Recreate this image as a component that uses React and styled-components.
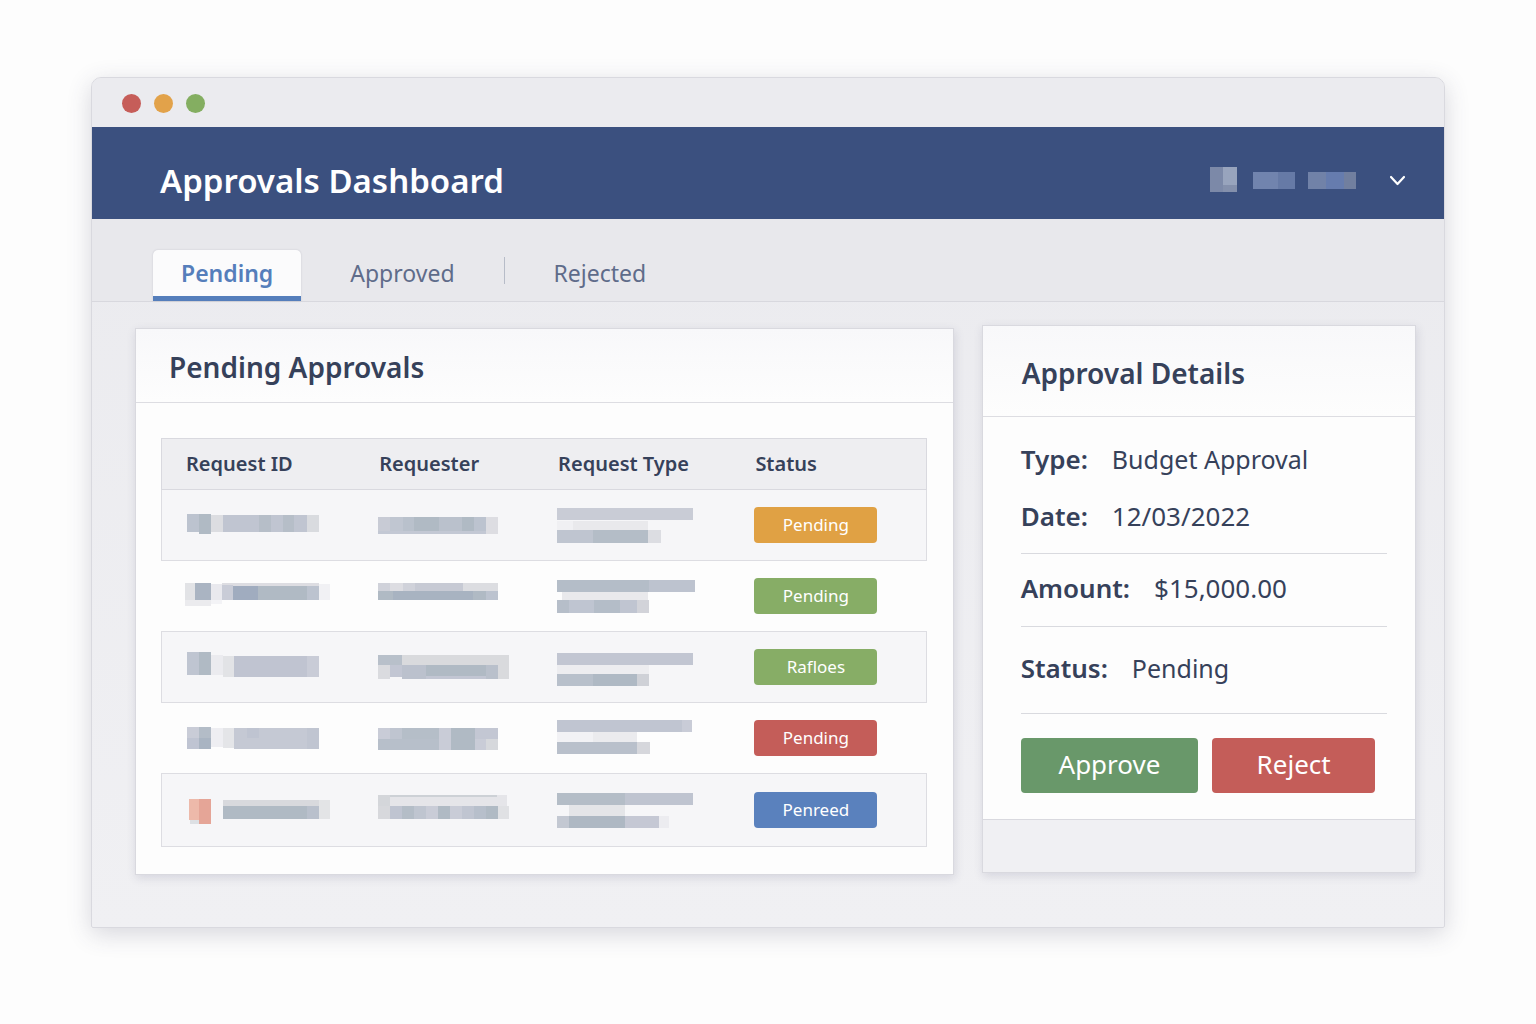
import React, { useState } from 'react';
import styled, { createGlobalStyle } from 'styled-components';

const GlobalStyle = createGlobalStyle`
  *, *::before, *::after { box-sizing: border-box; }

  body {
    margin: 0;
    background: #fdfdfd;
    color: #36415a;
    font-family: 'Noto Sans', 'Open Sans', sans-serif;
  }

  button {
    font-family: inherit;
    border: 0;
    cursor: pointer;
  }
`;

const Page = styled.div`
  min-height: 100vh;
  padding: 77px 91px 95px;
`;

const Window = styled.div`
  background: linear-gradient(#eaeaee, #f0f0f3);
  border: 1px solid #d9d9df;
  border-radius: 10px 10px 2px 2px;
  box-shadow: 0 6px 24px rgba(60, 60, 90, 0.2);
  overflow: hidden;
`;

const TitleBar = styled.div`
  display: flex;
  align-items: center;
  gap: 13px;
  height: 49px;
  padding: 2px 30px 0;
  background: #ebebef;
`;

const Dot = styled.span`
  width: 19px;
  height: 19px;
  border-radius: 50%;
  background: ${({ $color }) => $color};
`;

const Header = styled.header`
  display: flex;
  align-items: center;
  justify-content: space-between;
  height: 92px;
  padding: 16px 38px 0 68px;
  background: #3b507f;
`;

const AppTitle = styled.h1`
  margin: 0;
  color: #fff;
  font-size: 33px;
  font-weight: 600;
  line-height: 44px;
`;

const UserMenu = styled.button`
  display: flex;
  align-items: center;
  gap: 32px;
  padding: 0;
  background: none;
`;

const Tabs = styled.nav`
  display: flex;
  gap: 21px;
  height: 83px;
  padding: 31px 61px 0;
  background: #e8e8ec;
  border-bottom: 1px solid #d8d8de;
`;

const Tab = styled.button`
  padding: 0 28px;
  background: ${({ $active }) => ($active ? '#fbfbfc' : 'none')};
  border-bottom: 5px solid ${({ $active }) => ($active ? '#557ebb' : 'transparent')};
  border-radius: 5px 5px 0 0;
  box-shadow: ${({ $active }) => ($active ? '0 0 2px rgba(60, 60, 90, 0.2)' : 'none')};
  color: ${({ $active }) => ($active ? '#557ebb' : '#5f6c8a')};
  font-size: 23px;
  font-weight: ${({ $active }) => ($active ? 600 : 400)};
`;

const TabDivider = styled.span`
  width: 1px;
  height: 27px;
  margin-top: 7px;
  background: #b7bcc8;
`;

const Content = styled.main`
  display: grid;
  grid-template-columns: minmax(0, 818fr) minmax(0, 434fr);
  align-items: start;
  gap: 28px;
  padding: 23px 28px 52px 43px;
`;

const Panel = styled.section`
  background: #fdfdfd;
  border: 1px solid #d9d9df;
  box-shadow: 1px 3px 9px rgba(60, 60, 100, 0.15);
`;

const ListPanel = styled(Panel)`
  margin-top: 3px;
`;

const PanelHeader = styled.div`
  display: flex;
  align-items: center;
  height: ${({ $tall }) => ($tall ? 91 : 74)}px;
  padding: ${({ $tall }) => ($tall ? '3px 39px 0' : '2px 33px 0')};
  background: linear-gradient(#f8f8fa, #fdfdfd);
  border-bottom: 1px solid #dddde2;
`;

const PanelTitle = styled.h2`
  margin: 0;
  font-size: 28px;
  font-weight: 600;
  line-height: 36px;
`;

const TableWrap = styled.div`
  padding: 35px 26px 27px 25px;
`;

const Table = styled.table`
  width: 100%;
  table-layout: fixed;
  border-collapse: collapse;
`;

const HeadRow = styled.tr`
  height: 51px;
  background: #eeeef1;
  border: 1px solid #d9d9df;
`;

const HeadCell = styled.th`
  width: ${({ $width }) => $width};
  padding: 0 0 0 25px;
  font-size: 20px;
  font-weight: 600;
  line-height: 28px;
  text-align: left;

  &:first-child {
    padding-left: 24px;
  }
`;

const Row = styled.tr`
  height: 71px;

  &:nth-child(odd) {
    background: #f6f6f8;
    border: 1px solid #dddde2;
  }

  &:last-child {
    height: 73px;
  }
`;

const Cell = styled.td`
  padding: 0 0 0 24px;

  &:first-child {
    padding-left: 21px;
  }
`;

const Badge = styled.span`
  display: block;
  width: 123px;
  border-radius: 4px;
  background: ${({ $color }) => $color};
  color: #fff;
  font-size: 17px;
  font-variant-ligatures: none;
  line-height: 36px;
  text-align: center;
`;

const Mosaic = styled.svg`
  display: block;
  max-width: 100%;
`;

const Fields = styled.dl`
  margin: 0;
  padding: 7px 28px 0 38px;
`;

const FieldGroup = styled.div`
  display: grid;
  gap: 21px;
  padding: ${({ $pad }) => $pad};
  border-bottom: 1px solid #d9dadf;
`;

const Field = styled.div`
  display: flex;
  gap: 24px;
  line-height: 36px;
`;

const FieldName = styled.dt`
  font-size: 26px;
  font-weight: 600;
`;

const FieldValue = styled.dd`
  margin: 0;
  font-size: ${({ $numeric }) => ($numeric ? 26 : 25)}px;
`;

const Actions = styled.div`
  display: flex;
  gap: 14px;
  padding: 24px 40px 26px 38px;
`;

const ActionButton = styled.button`
  flex: ${({ $grow }) => $grow} 1 0;
  height: 55px;
  padding: 0 0 4px;
  border-radius: 4px;
  background: ${({ $color }) => $color};
  color: #fff;
  font-size: 26px;
`;

const PanelFooter = styled.div`
  height: 53px;
  background: #f0f0f3;
  border-top: 1px solid #d9d9df;
`;

// Each block is [x, y, width, height, colour]
const Redacted = ({ blocks, width = 150, height = 48, label }) => (
  <Mosaic
    width={width}
    height={height}
    viewBox={`0 0 ${width} ${height}`}
    shapeRendering="crispEdges"
    role="img"
    aria-label={label}
  >
    {blocks.map(([x, y, w, h, fill], i) => (
      <rect key={i} x={x} y={y} width={w} height={h} fill={fill} />
    ))}
  </Mosaic>
);

const userBlocks = [
  [0, 0, 13, 25, '#7c89a8'], [13, 0, 14, 18, '#98a4bd'], [13, 18, 14, 7, '#8490ac'],
  [43, 5, 25, 17, '#7184ae'], [68, 5, 17, 17, '#667aa6'],
  [98, 5, 18, 17, '#7182a8'], [116, 5, 18, 17, '#667cae'], [134, 5, 12, 17, '#717f9f'],
];

const rows = [
  {
    status: 'Pending',
    color: '#e0a144',
    id: [
      [4, 13, 12, 18, '#bcc3cf'], [16, 13, 12, 20, '#b0bac4'], [28, 14, 12, 17, '#dcdde1'],
      [40, 14, 36, 17, '#c0c5d1'], [76, 14, 12, 17, '#b6bec8'], [88, 14, 12, 17, '#c0c5d1'],
      [100, 14, 11, 17, '#b6bec8'], [111, 14, 13, 17, '#c0c5d1'], [124, 14, 12, 17, '#d9dbdf'],
    ],
    requester: [
      [0, 16, 12, 17, '#c8cbd5'], [12, 16, 13, 17, '#c0c6d1'], [25, 16, 11, 17, '#b9c1cc'],
      [36, 16, 25, 17, '#b0bac4'], [61, 16, 23, 17, '#bac1cc'], [84, 16, 12, 17, '#b0bac4'],
      [96, 16, 12, 17, '#bcc3cf'], [108, 16, 12, 17, '#dddde2'],
      [0, 30, 108, 3, '#c3c8d4'],
    ],
    type: [
      [0, 7, 136, 12, '#c9ccd6'], [16, 20, 75, 9, '#e9e9ec'], [0, 20, 16, 9, '#f0f0f3'],
      [0, 29, 36, 13, '#bfc5d0'], [36, 29, 55, 13, '#b4bdc7'], [91, 29, 13, 13, '#dcdde2'],
    ],
  },
  {
    status: 'Pending',
    color: '#87ad66',
    id: [
      [2, 11, 10, 17, '#e2e3e6'], [12, 11, 16, 17, '#aab4c2'], [2, 28, 26, 6, '#ebebee'],
      [28, 12, 11, 16, '#e9e9ee'], [28, 28, 11, 4, '#f3f3f6'], [39, 11, 97, 3, '#dddde2'],
      [39, 13, 11, 15, '#c9ccd7'], [50, 14, 25, 14, '#a0acbf'], [75, 14, 49, 14, '#b0bac4'],
      [124, 14, 12, 14, '#bcc3cf'], [136, 12, 11, 16, '#f1f1f4'],
    ],
    requester: [
      [0, 11, 12, 9, '#d0d2da'], [12, 11, 13, 9, '#dddde2'], [25, 11, 12, 9, '#d0d2da'],
      [37, 11, 48, 9, '#c7cad4'], [85, 11, 35, 9, '#dcdde1'], [0, 19, 108, 9, '#b0bac4'],
      [15, 19, 80, 9, '#a8b3c1'], [108, 19, 12, 9, '#bcc3cf'],
    ],
    type: [
      [0, 8, 92, 12, '#b4bdc8'], [92, 8, 46, 12, '#bdc3cf'], [5, 20, 86, 8, '#e9e9ec'],
      [0, 28, 12, 13, '#b6bec9'], [12, 28, 25, 13, '#bfc5d1'], [37, 28, 26, 13, '#b4bdc8'],
      [63, 28, 17, 13, '#c0c5d1'], [80, 28, 12, 13, '#d2d3d9'],
    ],
  },
  {
    status: 'Rafloes',
    color: '#87ad66',
    id: [
      [4, 9, 12, 23, '#bfc5d1'], [16, 9, 12, 23, '#b0bac4'], [28, 12, 12, 20, '#ebebef'],
      [40, 13, 11, 21, '#e2e3e6'], [51, 13, 73, 21, '#c0c4d1'], [124, 13, 12, 21, '#c9ccd7'],
    ],
    requester: [
      [0, 12, 24, 10, '#b8c0ca'], [24, 12, 107, 10, '#d9dadd'], [0, 22, 12, 14, '#dadbdf'],
      [12, 22, 12, 12, '#c2c6d3'], [24, 22, 24, 14, '#bbc1cd'], [48, 22, 60, 14, '#c2c6d3'],
      [48, 22, 60, 11, '#b0bac4'], [108, 22, 12, 14, '#b9c0cb'], [120, 22, 11, 14, '#d9dadd'],
    ],
    type: [
      [0, 10, 136, 12, '#c2c6d2'], [0, 22, 92, 9, '#ededf0'],
      [0, 31, 36, 12, '#b8c0cb'], [36, 31, 44, 12, '#afb9c4'], [80, 31, 12, 12, '#cfd1d7'],
    ],
  },
  {
    status: 'Pending',
    color: '#c45d59',
    id: [
      [4, 13, 12, 11, '#c9ccd7'], [4, 24, 12, 11, '#bfc4d2'], [16, 13, 12, 11, '#b3bcc7'],
      [16, 24, 12, 11, '#a9b4c2'], [28, 14, 12, 19, '#eeeef2'], [40, 14, 11, 20, '#e4e5e8'],
      [51, 14, 73, 21, '#c5c9d4'], [64, 14, 12, 10, '#bfc4d1'], [124, 14, 12, 21, '#c0c5d1'],
    ],
    requester: [
      [0, 14, 12, 11, '#c9ccd7'], [12, 14, 12, 11, '#bfc5d0'], [24, 14, 37, 11, '#b5bec8'],
      [0, 25, 61, 11, '#b7bfca'], [61, 14, 12, 22, '#c9ccd7'], [73, 14, 24, 22, '#b0bac4'],
      [97, 14, 23, 11, '#c3c7d3'], [97, 25, 11, 11, '#c9ccd7'], [108, 25, 12, 11, '#d6d8dc'],
    ],
    type: [
      [0, 6, 125, 12, '#c0c5d1'], [125, 6, 10, 12, '#c9ccd7'], [0, 18, 36, 10, '#f2f2f5'],
      [36, 18, 44, 10, '#ebebee'], [0, 28, 80, 12, '#b9c0cb'], [80, 28, 13, 12, '#d6d7dc'],
    ],
  },
  {
    status: 'Penreed',
    color: '#5a81bd',
    id: [
      [6, 13, 10, 21, '#edb9aa'], [16, 13, 12, 25, '#e5a597'], [7, 34, 9, 4, '#dde0e4'],
      [40, 14, 96, 6, '#d8d9dd'], [40, 20, 84, 13, '#b0bac4'], [124, 20, 12, 13, '#b9c0cc'],
      [136, 14, 11, 19, '#e3e4e6'],
    ],
    requester: [
      [0, 9, 12, 11, '#d4d6da'], [12, 9, 117, 11, '#e5e5e9'], [12, 9, 107, 2, '#cdd1d6'],
      [0, 20, 12, 13, '#d7d8dc'], [12, 20, 12, 13, '#bfc4d1'], [24, 20, 12, 13, '#b4bdc7'],
      [36, 20, 12, 13, '#bfc5d0'], [48, 20, 12, 13, '#c9ccd7'], [60, 20, 12, 13, '#b0bac4'],
      [72, 20, 12, 13, '#c9ccd7'], [84, 20, 12, 13, '#c0c5d1'], [96, 20, 12, 13, '#b7bfcb'],
      [108, 20, 12, 13, '#b0bac4'], [120, 20, 11, 13, '#e0e1e4'],
    ],
    type: [
      [0, 7, 68, 12, '#b4bdc7'], [68, 7, 68, 12, '#bfc4d0'], [12, 19, 56, 11, '#e4e5e8'],
      [0, 30, 12, 12, '#c3c8d2'], [12, 30, 56, 12, '#aeb8c3'], [68, 30, 34, 12, '#c5c8d4'],
      [102, 30, 10, 12, '#ececf0'],
    ],
  },
];

const App = () => {
  const [tab, setTab] = useState('Pending');

  return (
    <Page>
      <GlobalStyle />
      <Window>
        <TitleBar>
          <Dot $color="#c65d59" />
          <Dot $color="#e2a24a" />
          <Dot $color="#84ae61" />
        </TitleBar>
        <Header>
          <AppTitle>Approvals Dashboard</AppTitle>
          <UserMenu aria-label="User menu">
            <Redacted blocks={userBlocks} width={147} height={28} label="User name" />
            <svg width="17" height="12" viewBox="0 0 17 12" fill="none" aria-hidden="true">
              <path d="M2 2 L8.5 9 L15 2" stroke="#fff" strokeWidth="2.2" strokeLinecap="round" strokeLinejoin="round" />
            </svg>
          </UserMenu>
        </Header>
        <Tabs>
          <Tab $active={tab === 'Pending'} onClick={() => setTab('Pending')}>Pending</Tab>
          <Tab $active={tab === 'Approved'} onClick={() => setTab('Approved')}>Approved</Tab>
          <TabDivider />
          <Tab $active={tab === 'Rejected'} onClick={() => setTab('Rejected')}>Rejected</Tab>
        </Tabs>
        <Content>
          <ListPanel>
            <PanelHeader>
              <PanelTitle>Pending Approvals</PanelTitle>
            </PanelHeader>
            <TableWrap>
              <Table>
                <thead>
                  <HeadRow>
                    <HeadCell $width="25.2%">Request ID</HeadCell>
                    <HeadCell $width="23.4%">Requester</HeadCell>
                    <HeadCell $width="25.8%">Request Type</HeadCell>
                    <HeadCell $width="25.6%">Status</HeadCell>
                  </HeadRow>
                </thead>
                <tbody>
                  {rows.map((row, i) => (
                    <Row key={i}>
                      <Cell><Redacted blocks={row.id} label="Request ID" /></Cell>
                      <Cell><Redacted blocks={row.requester} label="Requester" /></Cell>
                      <Cell><Redacted blocks={row.type} label="Request type" /></Cell>
                      <Cell><Badge $color={row.color}>{row.status}</Badge></Cell>
                    </Row>
                  ))}
                </tbody>
              </Table>
            </TableWrap>
          </ListPanel>

          <Panel>
            <PanelHeader $tall>
              <PanelTitle>Approval Details</PanelTitle>
            </PanelHeader>
            <Fields>
              <FieldGroup $pad="17px 0 19px">
                <Field>
                  <FieldName>Type:</FieldName>
                  <FieldValue>Budget Approval</FieldValue>
                </Field>
                <Field>
                  <FieldName>Date:</FieldName>
                  <FieldValue $numeric>12/03/2022</FieldValue>
                </Field>
              </FieldGroup>
              <FieldGroup $pad="16px 0 20px">
                <Field>
                  <FieldName>Amount:</FieldName>
                  <FieldValue $numeric>$15,000.00</FieldValue>
                </Field>
              </FieldGroup>
              <FieldGroup $pad="23px 0 27px">
                <Field>
                  <FieldName>Status:</FieldName>
                  <FieldValue>Pending</FieldValue>
                </Field>
              </FieldGroup>
            </Fields>
            <Actions>
              <ActionButton $grow={178} $color="#69986a">Approve</ActionButton>
              <ActionButton $grow={163} $color="#c45d59">Reject</ActionButton>
            </Actions>
            <PanelFooter />
          </Panel>
        </Content>
      </Window>
    </Page>
  );
};

export default App;
